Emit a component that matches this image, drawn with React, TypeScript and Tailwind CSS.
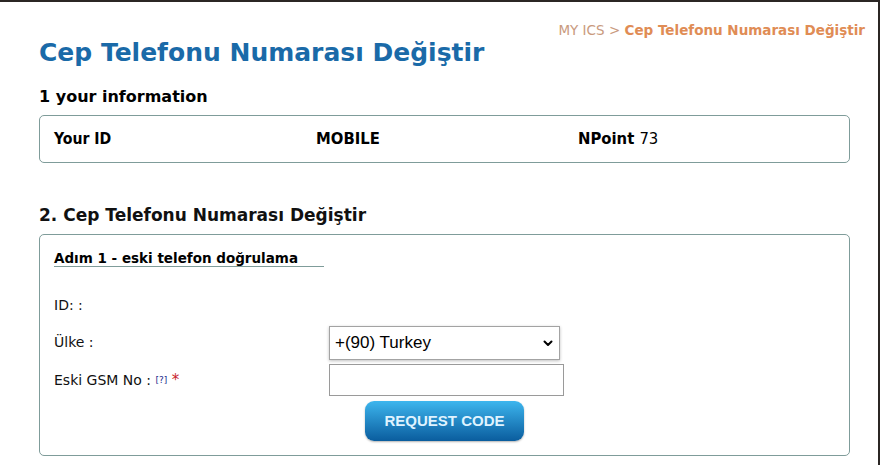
import React from 'react'

const verdana = "font-['DejaVu_Sans',Verdana,sans-serif]"
const condensed = "font-['DejaVu_Sans_Condensed','DejaVu_Sans',sans-serif]"

const InfoBox = () => (
    <div className={`w-[811px] h-[48px] border border-[#7f9c9a] rounded-[5px] flex items-center pl-[14px] text-[16.5px] font-bold text-black ${condensed}`}>
        <div className="w-[262px] scale-x-[0.95] origin-left">Your ID</div>
        <div className="w-[262px]">MOBILE</div>
        <div>NPoint <span className="font-normal">73</span></div>
    </div>
)

const FormRow = ({ label, children }: { label: React.ReactNode; children?: React.ReactNode }) => (
    <div className="flex items-center h-[37px]">
        <div className={`w-[275px] text-[14px] text-[#111] ${verdana}`}>{label}</div>
        {children}
    </div>
)

export default function App() {
    return (
        <div className="w-[880px] h-[465px] bg-white border-t-2 border-r-2 border-[#2b2624] overflow-hidden">
            <div className={`flex justify-end pr-[13px] pt-[18px] text-[13.5px] ${verdana}`}>
                <span className="text-[#c99a7e]">MY ICS &gt;&nbsp;</span>
                <span className="text-[#e08c55] font-bold">Cep Telefonu Numarası Değiştir</span>
            </div>
            <div className="pl-[39px]">
                <h1 className={`text-[25px] font-bold text-[#1a6aa8] leading-[30px] -mt-[2px] ${verdana}`}>Cep Telefonu Numarası Değiştir</h1>
                <h2 className={`mt-[19px] text-[16px] font-bold text-black leading-[20px] ${verdana}`}>1 your information</h2>
                <div className="mt-[8px]">
                    <InfoBox />
                </div>
                <h2 className={`mt-[41px] text-[17px] font-bold text-[#111] leading-[22px] ${verdana}`}>2. Cep Telefonu Numarası Değiştir</h2>
                <div className="mt-[8px] w-[811px] h-[222px] border border-[#7f9c9a] rounded-[5px] pl-[14px] pt-[14px]">
                    <div className="w-[270px] border-b border-[#7f9c9a] leading-[16px]">
                        <span className={`text-[13.5px] font-bold text-black ${verdana}`}>Adım 1 - eski telefon doğrulama</span>
                    </div>
                    <div className="mt-[20px]">
                        <FormRow label="ID: :" />
                        <FormRow label="Ülke :">
                            <div className="w-[231px] h-[34px] border border-[#a3a3a3] shadow-[0_1px_3px_rgba(0,0,0,0.25)] flex items-center justify-between pl-[5px] pr-[5px] font-['Liberation_Sans',Arial,sans-serif] text-[17px] text-black bg-white">
                                <span>+(90) Turkey</span>
                                <svg width="12" height="12" viewBox="0 0 12 12" fill="none" stroke="#000" strokeWidth="2" strokeLinecap="round" strokeLinejoin="round">
                                    <path d="M2.5 4.5 L6 8 L9.5 4.5" />
                                </svg>
                            </div>
                        </FormRow>
                        <FormRow
                            label={
                                <span>
                                    Eski GSM No : <span className="text-[9px] text-[#1a2a8a] align-middle">[?]</span>{' '}
                                    <span className="text-[#c8262d] text-[15px]">*</span>
                                </span>
                            }
                        >
                            <div className="w-[235px] h-[32px] border border-[#9a9a9a] bg-white" />
                        </FormRow>
                    </div>
                    <div className="pl-[311px] mt-[3px]">
                        <button className="w-[159px] h-[40px] rounded-[9px] bg-gradient-to-b from-[#3db6ee] to-[#0a5d9e] text-[#dff3ff] font-['Liberation_Sans',Arial,sans-serif] font-bold text-[15px] shadow-[0_1px_2px_rgba(0,0,0,0.3)]">
                            REQUEST CODE
                        </button>
                    </div>
                </div>
            </div>
        </div>
    )
}
